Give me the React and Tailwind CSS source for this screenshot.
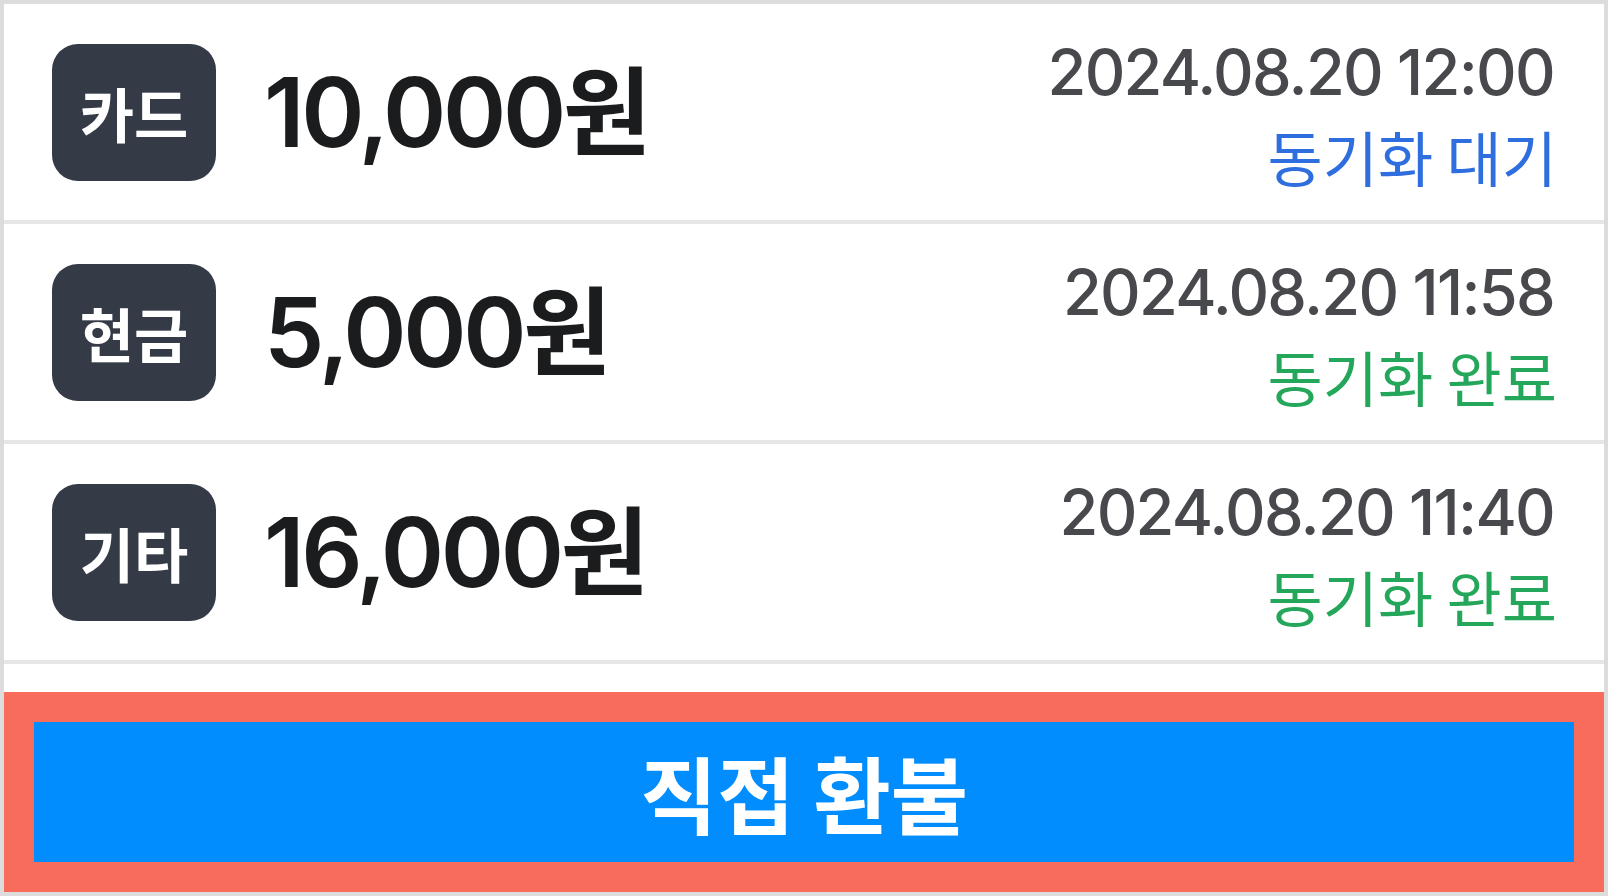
const rows = [
  { method: '카드', amount: '10,000원', date: '2024.08.20 12:00', status: '동기화 대기', synced: false },
  { method: '현금', amount: '5,000원', date: '2024.08.20 11:58', status: '동기화 완료', synced: true },
  { method: '기타', amount: '16,000원', date: '2024.08.20 11:40', status: '동기화 완료', synced: true },
];

const App = () => {
  return (
    <div
      className="h-[896px] w-full border-4 border-[#dcdcdc] bg-white flex flex-col overflow-hidden"
      style={{ fontFamily: 'Inter, "Noto Sans CJK KR", sans-serif' }}
    >
      {/* Payment list */}
      <div className="flex-1 overflow-hidden">
        {rows.map((row, i) => (
          <div key={i} className="h-[220px] flex items-center justify-between pl-12 pr-[50px] border-b-4 border-[#e6e6e6]">
            <div className="flex items-center gap-[48px]">
              <div className="w-[164px] h-[137px] rounded-[26px] bg-[#343b47] flex items-center justify-center">
                <span className="text-white text-[59px] font-bold leading-none" style={{ fontFamily: '"Noto Sans CJK KR", sans-serif' }}>{row.method}</span>
              </div>
              <span className="text-[96px] font-semibold text-[#1b1c1e] tracking-[-0.035em] leading-none">{row.amount}</span>
            </div>
            <div className="flex flex-col items-end gap-[22px] pt-[2px]">
              <span className="text-[63px] font-medium text-[#48494c] tracking-[-0.027em] leading-none">{row.date}</span>
              <span className={`text-[60px] leading-none -mr-[3px] ${row.synced ? 'text-[#24a75a]' : 'text-[#2f6ede]'}`} style={{ fontFamily: '"Noto Sans CJK KR", sans-serif' }}>{row.status}</span>
            </div>
          </div>
        ))}
      </div>

      {/* Refund action */}
      <div className="bg-[#f76c5a] p-[30px]">
        <button className="w-full h-[140px] bg-[#018dfe] flex items-center justify-center">
          <span className="text-white text-[84px] font-bold leading-none" style={{ fontFamily: '"Noto Sans CJK KR", sans-serif' }}>직접 환불</span>
        </button>
      </div>
    </div>
  );
};

export default App;
